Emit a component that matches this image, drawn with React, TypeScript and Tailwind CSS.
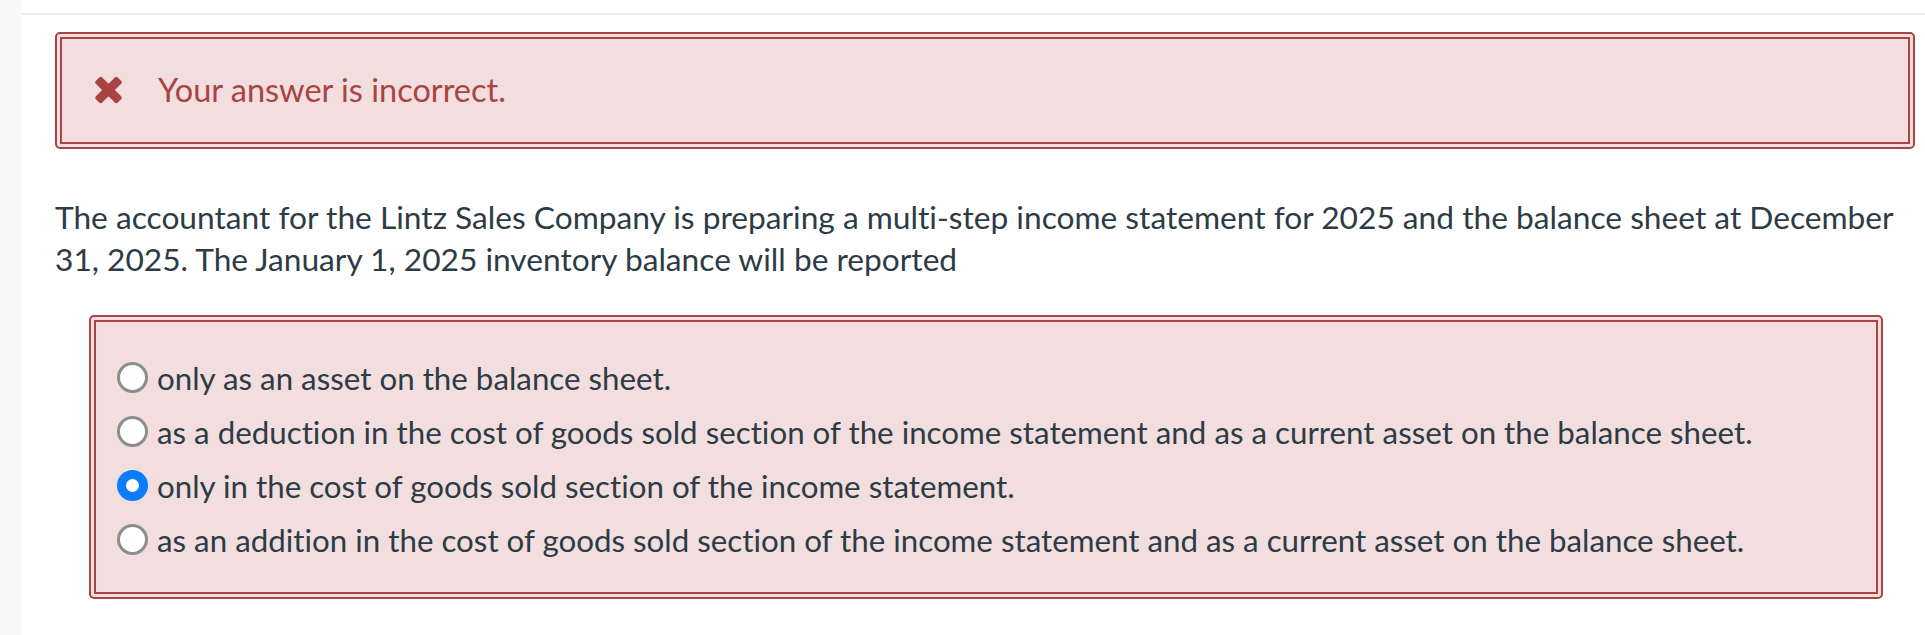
import React from 'react';

const options = [
  { id: 'a', label: 'only as an asset on the balance sheet.' },
  {
    id: 'b',
    label:
      'as a deduction in the cost of goods sold section of the income statement and as a current asset on the balance sheet.',
  },
  { id: 'c', label: 'only in the cost of goods sold section of the income statement.' },
  {
    id: 'd',
    label:
      'as an addition in the cost of goods sold section of the income statement and as a current asset on the balance sheet.',
  },
];

function CrossIcon() {
  return (
    <svg width="29" height="28" viewBox="0 0 29 28" className="shrink-0">
      <g fill="#a94442" transform="translate(14.5 14)">
        <rect x="-15.5" y="-4.5" width="31" height="9" rx="2.5" transform="rotate(45)" />
        <rect x="-15.5" y="-4.5" width="31" height="9" rx="2.5" transform="rotate(-45)" />
      </g>
    </svg>
  );
}

function Radio({ checked }: { checked: boolean }) {
  return checked ? (
    <span className="flex h-[31px] w-[31px] shrink-0 items-center justify-center rounded-full bg-[#0a7cff]">
      <span className="h-[13px] w-[13px] rounded-full bg-white" />
    </span>
  ) : (
    <span className="h-[31px] w-[31px] shrink-0 rounded-full border-[3px] border-[#8d8d8d] bg-white" />
  );
}

export default function App() {
  const selected = 'c';

  return (
    <div
      className="flex min-h-[635px] bg-white text-[31.5px] leading-[42px] text-[#2d3b45] [font-variant-ligatures:none]"
      style={{ fontFamily: 'Lato, "Open Sans", sans-serif' }}
    >
      <div className="w-[22px] shrink-0 bg-[#f9f9f9]" />
      <div className="flex-1">
        <div className="mt-[13px] h-[2px] bg-[#ececec]" />
        <div className="pl-[33px] pr-[10px]">
          <div className="mt-[17px] rounded-[5px] border-2 border-[#a94442] bg-[#f2dede] p-[3px]">
            <div className="flex items-center border-2 border-[#a94442] pt-[30px] pb-[31px] pl-[32px]">
              <CrossIcon />
              <span className="ml-[35px] text-[32.5px] text-[#a94442]">Your answer is incorrect.</span>
            </div>
          </div>

          <p className="mt-[47px] pr-[20px] text-[31.7px]">
            The accountant for the Lintz Sales Company is preparing a multi-step income statement for 2025 and the
            balance sheet at December 31, 2025. The January 1, 2025 inventory balance will be reported
          </p>

          <div className="mt-[35px] mr-[32px] ml-[34px] rounded-[5px] border-2 border-[#a94442] bg-[#f2dede] p-[3px]">
            <div className="flex flex-col gap-[23px] border-2 border-[#a94442] pt-[40px] pb-[37px] pl-[21px] text-[31.3px]">
              {options.map((o) => (
                <label key={o.id} className="flex h-[31px] items-center gap-[9px]">
                  <Radio checked={o.id === selected} />
                  <span>{o.label}</span>
                </label>
              ))}
            </div>
          </div>
        </div>
      </div>
    </div>
  );
}
